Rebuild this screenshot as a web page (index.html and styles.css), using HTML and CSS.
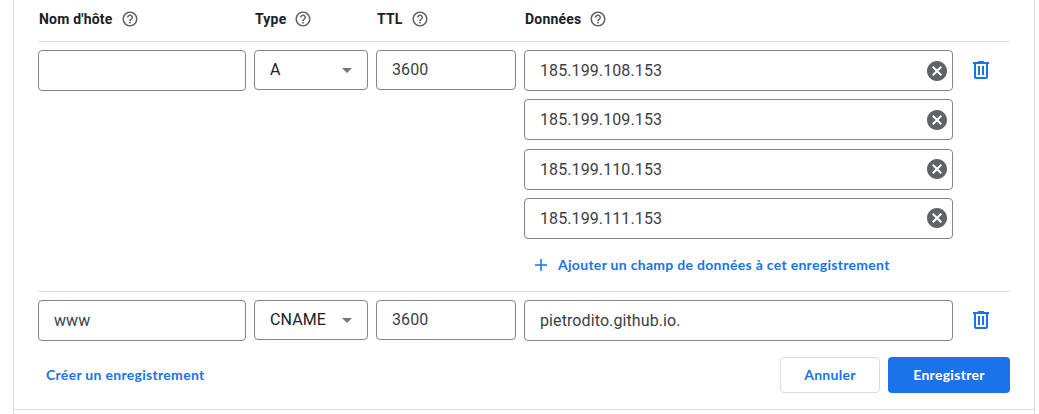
FILE: index.html
```html
<!DOCTYPE html>
<html lang="fr">
<head>
<meta charset="utf-8">
<title>Enregistrements DNS</title>
<link rel="stylesheet" href="styles.css">
</head>
<body>
<svg class="sprite" aria-hidden="true">
  <symbol id="help" viewBox="0 0 24 24"><path d="M11 18h2v-2h-2v2zm1-16C6.48 2 2 6.48 2 12s4.48 10 10 10 10-4.480 10-10S17.520 2 12 2zm0 18c-4.410 0-8-3.590-8-8s3.590-8 8-8 8 3.590 8 8-3.590 8-8 8zm0-14c-2.210 0-4 1.790-4 4h2c0-1.100.9-2 2-2s2 .9 2 2c0 2-3 1.750-3 5h2c0-2.250 3-2.500 3-5 0-2.210-1.790-4-4-4z"/></symbol>
  <symbol id="clear" viewBox="0 0 24 24"><path d="M12 2C6.470 2 2 6.470 2 12s4.470 10 10 10 10-4.470 10-10S17.530 2 12 2zm5 13.590L15.590 17 12 13.410 8.410 17 7 15.590 10.590 12 7 8.410 8.410 7 12 10.590 15.590 7 17 8.410 13.410 12 17 15.590z"/></symbol>
  <symbol id="trash" viewBox="0 0 16 18"><path d="M5 0h6v1h5v2h-1v13q0 2-2 2H3q-2 0-2-2V3H0V1h5zM3 3v13h10V3zM5 5h2v9H5zM9 5h2v9H9z" fill-rule="evenodd"/></symbol>
</svg>
<main class="panel">
  <div class="records">
    <header class="row head">
      <div class="label">Nom d'hôte<svg class="help"><use href="#help"/></svg></div>
      <div class="label">Type<svg class="help"><use href="#help"/></svg></div>
      <div class="label">TTL<svg class="help"><use href="#help"/></svg></div>
      <div class="label">Données<svg class="help"><use href="#help"/></svg></div>
    </header>
    <section class="row record first">
      <div class="field"></div>
      <div class="field select"><span class="type">A</span><i class="arrow"></i></div>
      <div class="field short">3600</div>
      <div class="data">
        <div class="field"><span>185.199.108.153</span><svg class="clear"><use href="#clear"/></svg></div>
        <div class="field"><span>185.199.109.153</span><svg class="clear"><use href="#clear"/></svg></div>
        <div class="field"><span>185.199.110.153</span><svg class="clear"><use href="#clear"/></svg></div>
        <div class="field"><span>185.199.111.153</span><svg class="clear"><use href="#clear"/></svg></div>
        <div class="add"><svg class="plus" viewBox="0 0 12 12"><path d="M6 0v12M0 6h12"/></svg><span class="add-text">Ajouter un champ de données à cet enregistrement</span></div>
      </div>
      <svg class="trash"><use href="#trash"/></svg>
    </section>
    <section class="row record">
      <div class="field">www</div>
      <div class="field select"><span class="type">CNAME</span><i class="arrow"></i></div>
      <div class="field short">3600</div>
      <div class="field">pietrodito.github.io.</div>
      <svg class="trash"><use href="#trash"/></svg>
    </section>
    <footer class="actions">
      <span class="create">Créer un enregistrement</span>
      <span class="button cancel">Annuler</span>
      <span class="button save">Enregistrer</span>
    </footer>
  </div>
</main>
</body>
</html>
```
FILE: styles.css
```css
* { box-sizing: border-box; }
body { margin: 0; background: #fff; overflow: hidden; font-family: Roboto, "Liberation Sans", sans-serif; color: #3c4043; }
.sprite { display: none; }
svg { display: block; flex: none; fill: currentColor; }
.panel { width: 1022px; height: 414px; margin-left: 13px; border: solid #dadce0; border-width: 0 1px; }
.records { height: 410px; padding: 0 24px; border-bottom: 1px solid #dadce0; }
.row { display: grid; grid-template-columns: 208px 114px 140px 429px 18px; column-gap: 8px; align-items: start; }
.head { height: 42px; padding-top: 10px; border-bottom: 1px solid #dadce0; }
.label { display: flex; align-items: center; height: 18px; padding-left: 1px; gap: 8px; font-size: 14px; font-weight: 700; color: #202124; letter-spacing: .2px; line-height: 20px; white-space: nowrap; }
.help { width: 18px; height: 18px; color: #5f6368; }
.record { padding-top: 8px; }
.first { height: 250px; border-bottom: 1px solid #dadce0; }
.field { display: flex; align-items: center; justify-content: space-between; height: 41px; padding: 1px 5px 0 15px; border: 1px solid #80868b; border-radius: 4px; font-size: 16px; letter-spacing: .1px; line-height: 20px; }
.select, .short { height: 40px; padding-top: 0; }
.select { padding-right: 15px; color: #212121; }
.arrow { border: solid transparent; border-width: 5px 5px 0; border-top-color: #757575; }
.data { display: grid; row-gap: 8.333px; }
.clear { width: 24px; height: 24px; margin: -1px -2px 0 0; color: #5f6368; }
.add { display: flex; align-items: center; gap: 11px; height: 36px; padding-left: 11px; color: #1a73e8; }
.plus { width: 12px; height: 12px; stroke: currentColor; stroke-width: 1.5; }
.add-text, .create, .button { font: 700 14px/20px Lato, sans-serif; letter-spacing: .3px; white-space: nowrap; }
.trash { width: 16px; height: 18px; margin: 11px 0 0 12px; color: #1a73e8; }
.actions { display: flex; align-items: center; gap: 8px; height: 36px; margin-top: 16px; }
.create { margin-right: auto; padding-left: 8px; color: #1a73e8; }
.button { display: flex; align-items: center; justify-content: center; height: 36px; border-radius: 4px; }
.cancel { width: 100px; border: 1px solid #dadce0; color: #1a73e8; }
.save { width: 122px; background: #1a73e8; color: #fff; }
```
